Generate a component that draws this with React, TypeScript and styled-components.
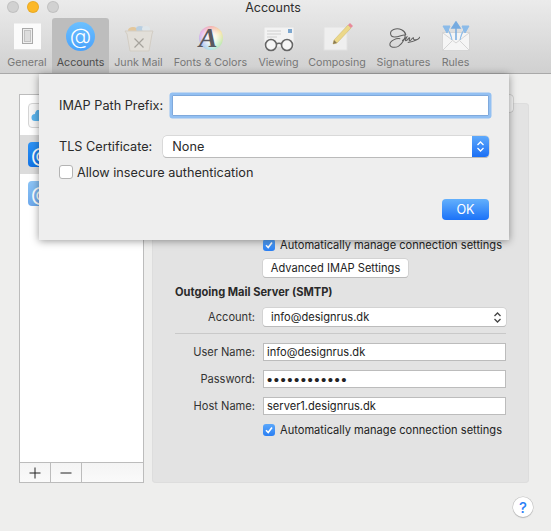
import React from "react";
import styled, { createGlobalStyle } from "styled-components";

const GlobalStyle = createGlobalStyle`
    html, body {
        margin: 0;
        padding: 0;
        background-color: #eeeeed;
    }
    body {
        font-family: "Inter", "Liberation Sans", sans-serif;
        color: #222222;
    }
`

const Page = styled.div`
    position: relative;
    width: 551px;
    height: 531px;
    overflow: hidden;
    background-color: #eeeeed;
`

const WindowBar = styled.header`
    position: relative;
    height: 73px;
    background: linear-gradient(#ebebeb, #d0d0d0);
    border-bottom: 1px solid #a9a9a9;
`

const TitleRow = styled.div`
    position: relative;
    height: 18px;
    padding-right: 5px;
    text-align: center;
    font-size: 12.5px;
    line-height: 15px;
    color: #2e2e2e;
`

const Lights = styled.div`
    position: absolute;
    left: 7px;
    top: 1px;
    display: flex;
    gap: 8px;
`

const Light = styled.span<{ $color: string }>`
    width: 12px;
    height: 12px;
    border-radius: 50%;
    background-color: ${({ $color }) => $color};
    box-shadow: inset 0 0 0 1px #00000014;
`

const Tabs = styled.nav`
    display: flex;
    padding-left: 3px;
    gap: 1px;
`

const Tab = styled.div<{ $active?: boolean; $width: number }>`
    display: flex;
    flex-direction: column;
    align-items: center;
    width: ${({ $width }) => $width}px;
    height: 55px;
    flex: none;
    border-radius: 3px 3px 0 0;
    background: ${({ $active }) => ($active ? "#bdbdbd" : "transparent")};
`

const TabIcon = styled.div`
    display: flex;
    align-items: center;
    justify-content: center;
    width: 32px;
    height: 34px;
    margin-top: 1px;
`

const TabLabel = styled.span<{ $active?: boolean }>`
    font-size: 10.7px;
    line-height: 13px;
    margin-top: 3px;
    white-space: nowrap;
    color: ${({ $active }) => ($active ? "#4c4c4c" : "#777777")};
`

const AtBadge = styled.div`
    display: flex;
    align-items: center;
    justify-content: center;
    width: 29px;
    height: 29px;
    border-radius: 50%;
    background: linear-gradient(#6cc0ff, #4aa2fb);
    color: #ffffff;
    font-size: 22px;
    font-weight: 300;
    line-height: 27px;
`

const FontWheel = styled.div`
    display: flex;
    align-items: flex-end;
    justify-content: center;
    box-sizing: border-box;
    width: 24px;
    height: 24px;
    margin-top: 4px;
    padding-right: 5px;
    border-radius: 50%;
    background: radial-gradient(#ffffffcc 30%, #ffffff00 75%), conic-gradient(#f3a6a6, #f6e3a0, #b9e8a8, #a8e2e4, #a9b8ee, #e2a9e6, #f3a6a6);
    font-family: "Liberation Serif", serif;
    font-style: italic;
    font-weight: 700;
    font-size: 28px;
    line-height: 24px;
    color: #5a5a60;
`

const Content = styled.main`
    display: flex;
    align-items: flex-end;
    gap: 8px;
    height: 409px;
    padding-left: 19px;
`

const Sidebar = styled.aside`
    display: flex;
    flex-direction: column;
    width: 123px;
    height: 387px;
    background-color: #ffffff;
    border: 1px solid #bcbcbc;
`

const AccountList = styled.div`
    flex: 1;
    padding-top: 1px;
`

const AccountRow = styled.div<{ $selected?: boolean }>`
    display: flex;
    align-items: center;
    height: 39px;
    padding-left: 8px;
    background-color: ${({ $selected }) => ($selected ? "#dcdcdc" : "transparent")};
`

const AccountIcon = styled.div<{ $bg: string; $framed?: boolean }>`
    display: flex;
    align-items: center;
    box-sizing: border-box;
    padding-left: ${({ $framed }) => ($framed ? "2px" : "3px")};
    width: 24px;
    height: 25px;
    border-radius: 4px;
    background: ${({ $bg }) => $bg};
    border: ${({ $framed }) => ($framed ? "1px solid #d4d4d4" : "none")};
    color: #ffffff;
    font-size: 20px;
`

const ListFooter = styled.div`
    display: flex;
    height: 19px;
    border-top: 1px solid #bcbcbc;
    background: linear-gradient(#f4f4f4, #fafafa);
`

const FooterButton = styled.div`
    display: flex;
    align-items: center;
    justify-content: center;
    width: 30px;
    border-right: 1px solid #bcbcbc;
`

const SettingsPanel = styled.section`
    display: flex;
    flex-direction: column;
    align-items: flex-start;
    box-sizing: border-box;
    width: 377px;
    height: 380px;
    padding: 135px 23px 0 23px;
    background-color: #e3e3e3;
    border-radius: 4px;
    box-shadow: inset 0 0 0 1px #dddddd;
    font-size: 11.1px;
`

const CheckRow = styled.label<{ $top?: number }>`
    display: flex;
    align-items: center;
    gap: 5px;
    height: 14px;
    margin-left: 88px;
    margin-top: ${({ $top }) => $top ?? 0}px;
    white-space: nowrap;
`

const CheckBox = styled.span<{ $checked?: boolean }>`
    display: flex;
    align-items: center;
    justify-content: center;
    flex: none;
    box-sizing: border-box;
    width: 12px;
    height: 12px;
    border-radius: 3px;
    background: ${({ $checked }) => ($checked ? "linear-gradient(#5aa7fb, #2a7ff3)" : "#ffffff")};
    border: ${({ $checked }) => ($checked ? "none" : "1px solid #b8b8b8")};
`

const PlainButton = styled.div`
    display: flex;
    align-items: center;
    justify-content: center;
    box-sizing: border-box;
    width: 145px;
    height: 18px;
    margin: 7px 0 0 88px;
    background-color: #ffffff;
    border-radius: 3px;
    box-shadow: 0 0 0 0.5px #c4c4c4, 0 1px 0 #b4b4b4;
    white-space: nowrap;
`

const SectionTitle = styled.h3`
    margin: 8px 0 0 0;
    font-size: 11.1px;
    line-height: 14px;
    font-weight: 700;
    color: #2a2a2a;
`

const FormRow = styled.div<{ $top: number }>`
    display: flex;
    align-items: center;
    gap: 8px;
    width: 100%;
    margin-top: ${({ $top }) => $top}px;
`

const RowLabel = styled.span`
    width: 80px;
    text-align: right;
    white-space: nowrap;
    color: #333333;
`

const SmallSelect = styled.div`
    display: flex;
    align-items: center;
    justify-content: space-between;
    box-sizing: border-box;
    flex: 1;
    height: 18px;
    padding: 0 4px 0 8px;
    background-color: #ffffff;
    border-radius: 3px;
    box-shadow: 0 0 0 0.5px #c4c4c4, 0 1px 0 #b4b4b4;
`

const Divider = styled.hr`
    width: 100%;
    height: 1px;
    margin: 7px 0 0 0;
    border: none;
    background-color: #c9c9c9;
`

const TextField = styled.div<{ $dots?: boolean }>`
    display: flex;
    align-items: center;
    box-sizing: border-box;
    flex: 1;
    height: 18px;
    padding-left: 3px;
    background-color: #ffffff;
    border: 1px solid #bcbcbc;
    font-family: ${({ $dots }) => ($dots ? '"Liberation Sans", sans-serif' : "inherit")};
    font-size: ${({ $dots }) => ($dots ? "15px" : "inherit")};
    letter-spacing: ${({ $dots }) => ($dots ? "1.5px" : "0")};
`

const HelpButton = styled.div`
    position: absolute;
    left: 513px;
    top: 497px;
    display: flex;
    align-items: center;
    justify-content: center;
    width: 20px;
    height: 20px;
    border-radius: 50%;
    background-color: #ffffff;
    box-shadow: 0 0 0 0.5px #c0c0c0, 0 1px 1px #b0b0b0;
    color: #2b7ff6;
    font-size: 15px;
    font-weight: 500;
`

const HiddenTab = styled.div`
    position: absolute;
    left: 490px;
    top: 95px;
    width: 23px;
    height: 17px;
    border-radius: 3px;
    background-color: #f2f2f2;
    box-shadow: 0 0 0 0.5px #b8b8b8;
`

const Sheet = styled.div`
    position: absolute;
    left: 39px;
    top: 74px;
    display: flex;
    flex-direction: column;
    box-sizing: border-box;
    width: 470px;
    height: 166px;
    padding: 21px 20px 0 20px;
    background-color: #eeeeee;
    box-shadow: 0 1px 8px #00000066;
    font-size: 12.7px;
    color: #2a2a2a;
`

const SheetRow = styled.div<{ $top?: number; $gap: number }>`
    display: flex;
    align-items: center;
    gap: ${({ $gap }) => $gap}px;
    margin-top: ${({ $top }) => $top ?? 0}px;
`

const PrefixInput = styled.div`
    flex: 1;
    height: 21px;
    background-color: #ffffff;
    border: 1px solid #7fa9dc;
    box-sizing: border-box;
    box-shadow: 0 0 0 2.5px #93c0f2;
    border-radius: 1px;
`

const SheetSelect = styled.div`
    display: flex;
    align-items: center;
    justify-content: space-between;
    flex: 1;
    height: 21px;
    padding-left: 9px;
    background-color: #ffffff;
    border-radius: 4px;
    box-shadow: 0 0 0 0.5px #c4c4c4, 0 1px 0 #b0b0b0;
`

const SelectStepper = styled.div`
    display: flex;
    align-items: center;
    justify-content: center;
    width: 17px;
    height: 21px;
    border-radius: 0 4px 4px 0;
    background: linear-gradient(#5ea9fb, #1b6ff5);
`

const SheetCheckRow = styled.label`
    display: flex;
    align-items: center;
    gap: 4px;
    height: 14px;
    margin-top: 8px;
`

const SheetCheck = styled.span`
    box-sizing: border-box;
    width: 14px;
    height: 14px;
    background-color: #ffffff;
    border: 1px solid #b4b4b4;
    border-radius: 3px;
`

const SheetActions = styled.div`
    display: flex;
    justify-content: flex-end;
    margin-top: 20px;
`

const OkButton = styled.div`
    display: flex;
    align-items: center;
    justify-content: center;
    width: 47px;
    height: 21px;
    border-radius: 4px;
    background: linear-gradient(#63b0fc, #1b72f8);
    color: #ffffff;
`

function Chevrons({ color }: { color: string }) {
    return (
        <svg width="9" height="13" viewBox="0 0 9 13" fill="none" stroke={color} strokeWidth="1.3">
            <path d="M1.5 5 4.5 2l3 3" />
            <path d="M1.5 8l3 3 3-3" />
        </svg>
    )
}

function Tick() {
    return (
        <svg width="10" height="10" viewBox="0 0 10 10" fill="none" stroke="#ffffff" strokeWidth="1.6">
            <path d="M2 5.2 4.2 7.5 8 2.5" />
        </svg>
    )
}

function GeneralIcon() {
    return (
        <svg width="27" height="30" viewBox="0 0 27 30">
            <rect y="2.5" width="27" height="27" fill="#fbfbfb" />
            <rect y="28.5" width="27" height="1" fill="#c9c9c9" />
            <rect x="8.5" y="7.5" width="10" height="15" fill="#eeeeee" stroke="#a9a9a9" />
            <rect x="10.5" y="9.5" width="6" height="11" fill="#dddddd" stroke="#c2c2c2" />
        </svg>
    )
}

function JunkIcon() {
    return (
        <svg width="30" height="32" viewBox="0 0 30 32">
            <ellipse cx="9" cy="10" rx="5" ry="3" fill="#e3c79c" />
            <ellipse cx="16" cy="9" rx="4" ry="3" fill="#b8cfe2" />
            <ellipse cx="22" cy="9" rx="4" ry="3" fill="#dfe6ea" />
            <path d="M1 11h28l-1 3-3 17H6L3 14z" fill="#e2dfd9" stroke="#d2cdc4" />
            <path d="M10.5 18.5l9 9M19.5 18.5l-9 9" stroke="#a6a39c" strokeWidth="1.2" />
        </svg>
    )
}

function ViewingIcon() {
    return (
        <svg width="32" height="32" viewBox="0 0 32 32" fill="none">
            <rect x="1" y="7" width="30" height="20" fill="#f3f3f3" stroke="#e0e0e0" />
            <rect x="25" y="9" width="4" height="4" fill="#7da7cf" />
            <path d="M4 11h14M4 14h14M4 17h10" stroke="#cfcfcf" />
            <circle cx="8" cy="25" r="5.5" stroke="#666666" strokeWidth="1.6" fill="#f6f6f6" />
            <circle cx="24" cy="25" r="5.5" stroke="#666666" strokeWidth="1.6" fill="#f6f6f6" />
            <path d="M13.5 24c1-1 4-1 5 0" stroke="#666666" strokeWidth="1.4" />
        </svg>
    )
}

function ComposingIcon() {
    return (
        <svg width="32" height="32" viewBox="0 0 32 32">
            <rect x="3" y="7" width="23" height="23" fill="#efefef" stroke="#e2e2e2" />
            <path d="M13 20 27 5l3 3-14 15-4 1z" fill="#ecd889" stroke="#c9b56a" strokeWidth="0.5" />
            <path d="M27 5l2-2 3 3-2 2z" fill="#e88a9a" />
            <path d="M13 20l3 3-4 1z" fill="#8a7a55" />
        </svg>
    )
}

function SignatureIcon() {
    return (
        <svg width="34" height="32" viewBox="0 0 34 32" fill="none" stroke="#5f5f5f" strokeWidth="1.1">
            <path d="M19 15C18 10 12 7 6 9 1 11 2 17 7 17c5 0 9-3 11-2 1 2-2 9-7 12-4 2-9 1-9-2 0-4 7-7 11-6" />
            <path d="M15 21c2-1 3-3 5-4-1 2-2 4-1 4 2 0 3-4 4-3 0 1-1 3 0 3 2 0 2-3 4-3 0 1 0 2 1 2 2 0 5-1 6-3-1 3-8 5-13 6" />
        </svg>
    )
}

function RulesIcon() {
    return (
        <svg width="28" height="30" viewBox="0 0 28 30">
            <rect x="0.5" y="11.5" width="27" height="18" fill="#f5f5f5" stroke="#d5d5d5" />
            <path d="M1 12l13 10 13-10M1 29l9-9M27 29l-9-9" fill="none" stroke="#d5d5d5" />
            <path d="M14 19V6M14 1l-4 6h8z" fill="#76abe0" stroke="#76abe0" strokeWidth="1.5" />
            <path d="M10 19C9 14 8 11 6 9M1 5l7 0-3 7z" fill="#8bbbe9" stroke="#8bbbe9" />
            <path d="M18 19c1-5 2-8 4-10M27 5l-7 0 3 7z" fill="#8bbbe9" stroke="#8bbbe9" />
        </svg>
    )
}

function CloudIcon() {
    return (
        <svg width="14" height="12" viewBox="0 0 14 12">
            <path d="M4 11a3.5 3.5 0 0 1 0-7 4.5 4.5 0 0 1 9 0v7z" fill="#5ab3ec" />
        </svg>
    )
}

export default function App() {
    return (
        <Page>
            <GlobalStyle />

            <WindowBar>
                <TitleRow>
                    <Lights>
                        <Light $color="#d1d1d1" />
                        <Light $color="#fcb827" />
                        <Light $color="#d1d1d1" />
                    </Lights>
                    Accounts
                </TitleRow>

                <Tabs>
                    <Tab $width={48}><TabIcon><GeneralIcon /></TabIcon><TabLabel>General</TabLabel></Tab>
                    <Tab $active $width={57}><TabIcon><AtBadge>@</AtBadge></TabIcon><TabLabel $active>Accounts</TabLabel></Tab>
                    <Tab $width={57}><TabIcon><JunkIcon /></TabIcon><TabLabel>Junk Mail</TabLabel></Tab>
                    <Tab $width={85}><TabIcon><FontWheel>A</FontWheel></TabIcon><TabLabel>Fonts &amp; Colors</TabLabel></Tab>
                    <Tab $width={49}><TabIcon><ViewingIcon /></TabIcon><TabLabel>Viewing</TabLabel></Tab>
                    <Tab $width={66}><TabIcon><ComposingIcon /></TabIcon><TabLabel>Composing</TabLabel></Tab>
                    <Tab $width={65}><TabIcon><SignatureIcon /></TabIcon><TabLabel>Signatures</TabLabel></Tab>
                    <Tab $width={37}><TabIcon><RulesIcon /></TabIcon><TabLabel>Rules</TabLabel></Tab>
                </Tabs>
            </WindowBar>

            <Content>
                <Sidebar>
                    <AccountList>
                        <AccountRow><AccountIcon $framed $bg="#f7f7f7"><CloudIcon /></AccountIcon></AccountRow>
                        <AccountRow $selected><AccountIcon $bg="linear-gradient(#2d93f5, #1273e6)">@</AccountIcon></AccountRow>
                        <AccountRow><AccountIcon $bg="linear-gradient(#8cc4f5, #6ea9ec)">@</AccountIcon></AccountRow>
                    </AccountList>
                    <ListFooter>
                        <FooterButton>
                            <svg width="12" height="12" viewBox="0 0 12 12" stroke="#222222" strokeWidth="1"><path d="M6 0.5v11M0.5 6h11" /></svg>
                        </FooterButton>
                        <FooterButton>
                            <svg width="12" height="12" viewBox="0 0 12 12" stroke="#222222" strokeWidth="1"><path d="M0.5 6h11" /></svg>
                        </FooterButton>
                    </ListFooter>
                </Sidebar>

                <SettingsPanel>
                    <CheckRow>
                        <CheckBox $checked><Tick /></CheckBox>
                        Automatically manage connection settings
                    </CheckRow>
                    <PlainButton>Advanced IMAP Settings</PlainButton>
                    <SectionTitle>Outgoing Mail Server (SMTP)</SectionTitle>
                    <FormRow $top={9}>
                        <RowLabel>Account:</RowLabel>
                        <SmallSelect>info@designrus.dk<Chevrons color="#444444" /></SmallSelect>
                    </FormRow>
                    <Divider />
                    <FormRow $top={9}>
                        <RowLabel>User Name:</RowLabel>
                        <TextField>info@designrus.dk</TextField>
                    </FormRow>
                    <FormRow $top={9}>
                        <RowLabel>Password:</RowLabel>
                        <TextField $dots>••••••••••••</TextField>
                    </FormRow>
                    <FormRow $top={9}>
                        <RowLabel>Host Name:</RowLabel>
                        <TextField>server1.designrus.dk</TextField>
                    </FormRow>
                    <CheckRow $top={8}>
                        <CheckBox $checked><Tick /></CheckBox>
                        Automatically manage connection settings
                    </CheckRow>
                </SettingsPanel>
            </Content>

            <HiddenTab />
            <HelpButton>?</HelpButton>

            <Sheet>
                <SheetRow $gap={9}>
                    <span>IMAP Path Prefix:</span>
                    <PrefixInput />
                </SheetRow>
                <SheetRow $top={20} $gap={11}>
                    <span>TLS Certificate:</span>
                    <SheetSelect>
                        None
                        <SelectStepper><Chevrons color="#ffffff" /></SelectStepper>
                    </SheetSelect>
                </SheetRow>
                <SheetCheckRow>
                    <SheetCheck />
                    Allow insecure authentication
                </SheetCheckRow>
                <SheetActions>
                    <OkButton>OK</OkButton>
                </SheetActions>
            </Sheet>
        </Page>
    )
}
